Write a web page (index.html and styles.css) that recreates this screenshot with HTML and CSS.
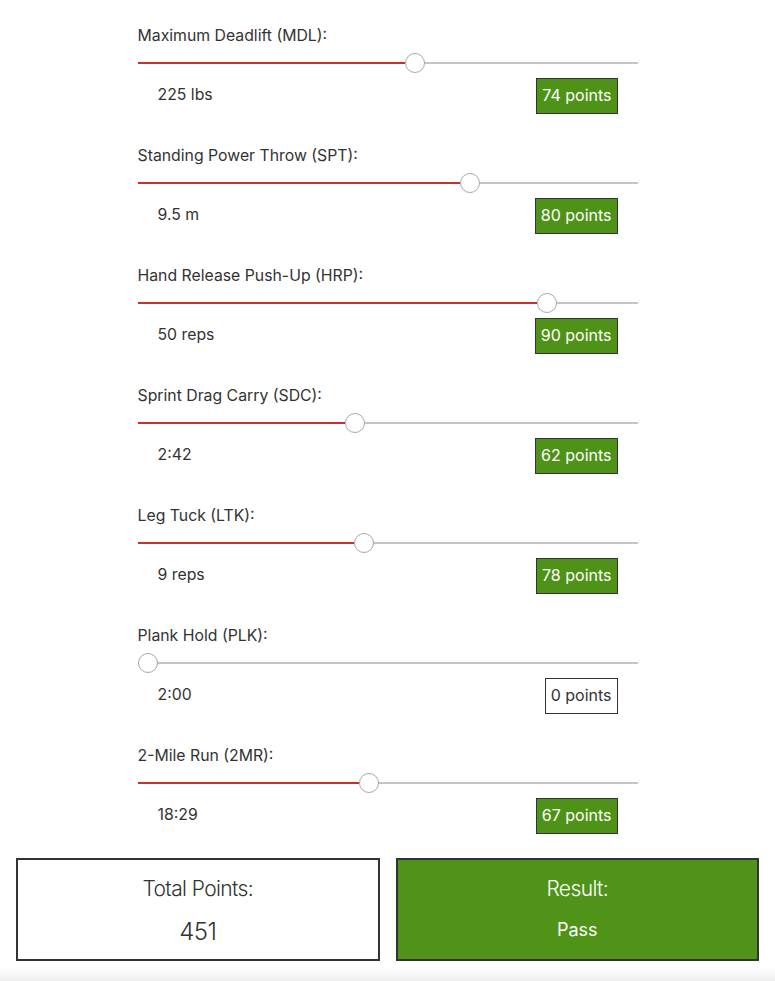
FILE: index.html
```html
<!DOCTYPE html>
<html>
<head>
<meta charset="utf-8">
<link rel="stylesheet" href="styles.css">
</head>
<body>
<div class="events">
  <div class="event">
    <div class="label">Maximum Deadlift (MDL):</div>
    <div class="slider"><div class="track"></div><div class="fill" style="width:267px"></div><div class="thumb" style="left:267px"></div></div>
    <div class="info"><span class="value">225 lbs</span><span class="badge">74 points</span></div>
  </div>
  <div class="event">
    <div class="label">Standing Power Throw (SPT):</div>
    <div class="slider"><div class="track"></div><div class="fill" style="width:322px"></div><div class="thumb" style="left:322px"></div></div>
    <div class="info"><span class="value">9.5 m</span><span class="badge">80 points</span></div>
  </div>
  <div class="event">
    <div class="label">Hand Release Push-Up (HRP):</div>
    <div class="slider"><div class="track"></div><div class="fill" style="width:399px"></div><div class="thumb" style="left:399px"></div></div>
    <div class="info"><span class="value">50 reps</span><span class="badge">90 points</span></div>
  </div>
  <div class="event">
    <div class="label">Sprint Drag Carry (SDC):</div>
    <div class="slider"><div class="track"></div><div class="fill" style="width:207px"></div><div class="thumb" style="left:207px"></div></div>
    <div class="info"><span class="value">2:42</span><span class="badge">62 points</span></div>
  </div>
  <div class="event">
    <div class="label">Leg Tuck (LTK):</div>
    <div class="slider"><div class="track"></div><div class="fill" style="width:216px"></div><div class="thumb" style="left:216px"></div></div>
    <div class="info"><span class="value">9 reps</span><span class="badge">78 points</span></div>
  </div>
  <div class="event">
    <div class="label">Plank Hold (PLK):</div>
    <div class="slider"><div class="track"></div><div class="fill" style="width:0px"></div><div class="thumb" style="left:0px"></div></div>
    <div class="info"><span class="value">2:00</span><span class="badge badge-zero">0 points</span></div>
  </div>
  <div class="event">
    <div class="label">2-Mile Run (2MR):</div>
    <div class="slider"><div class="track"></div><div class="fill" style="width:221px"></div><div class="thumb" style="left:221px"></div></div>
    <div class="info"><span class="value">18:29</span><span class="badge">67 points</span></div>
  </div>
</div>
<div class="summary">
  <div class="box total">
    <div class="box-title">Total Points:</div>
    <div class="box-value">451</div>
  </div>
  <div class="box result">
    <div class="box-title">Result:</div>
    <div class="box-sub">Pass</div>
  </div>
</div>
<div class="footer"></div>
</body>
</html>
```
FILE: styles.css
```css
html, body {
  margin: 0;
  padding: 0;
  background: #fff;
}
body {
  font-family: Inter, "Liberation Sans", Arial, sans-serif;
  color: #333;
  padding-top: 25px;
}
.events {
  width: 500px;
  margin: 0 auto;
}
.event {
  margin-bottom: 31px;
}
.event:last-child {
  margin-bottom: 0;
}
.label {
  font-size: 15.8px;
  line-height: 20px;
  height: 20px;
  padding-top: 1px;
  margin-bottom: -1px;
}
.slider {
  position: relative;
  height: 20px;
  margin-top: 8px;
}
.track {
  position: absolute;
  left: 0;
  right: 0;
  top: 9px;
  height: 2px;
  background: #c4c4c4;
}
.fill {
  position: absolute;
  left: 0;
  top: 9px;
  height: 2px;
  background: #c8302c;
}
.thumb {
  position: absolute;
  top: 0;
  width: 18px;
  height: 18px;
  border: 1px solid #a8a8a8;
  border-radius: 50%;
  background: #fff;
}
.info {
  display: flex;
  justify-content: space-between;
  align-items: center;
  margin-top: 5px;
  padding: 0 20px;
  height: 36px;
}
.value {
  font-size: 15.8px;
  padding-bottom: 3px;
}
.badge {
  box-sizing: border-box;
  height: 36px;
  line-height: 33px;
  padding: 0 5px;
  font-size: 16px;
  background: #4e9317;
  color: #fff;
  border: 1px solid #333;
}
.badge-zero {
  background: #fff;
  color: #333;
}
.summary {
  display: flex;
  gap: 16px;
  padding: 0 16px;
  margin-top: 24px;
}
.box {
  flex: 1;
  box-sizing: border-box;
  height: 103px;
  border: 2px solid #333;
  text-align: center;
  display: flex;
  flex-direction: column;
  align-items: center;
}
.total {
  background: #fff;
}
.result {
  background: #4f9418;
  color: #fff;
}
.box-title {
  font-size: 21px;
  line-height: 26px;
  margin-top: 16px;
  letter-spacing: -0.6px;
  font-weight: 300;
}
.box-value {
  font-size: 24px;
  line-height: 30px;
  margin-top: 15px;
  letter-spacing: -0.6px;
  font-weight: 300;
}
.box-sub {
  font-size: 18px;
  line-height: 24px;
  margin-top: 16px;
}
.footer {
  margin-top: 6px;
  height: 16px;
  background: linear-gradient(#ffffff, #ececec);
}
```
